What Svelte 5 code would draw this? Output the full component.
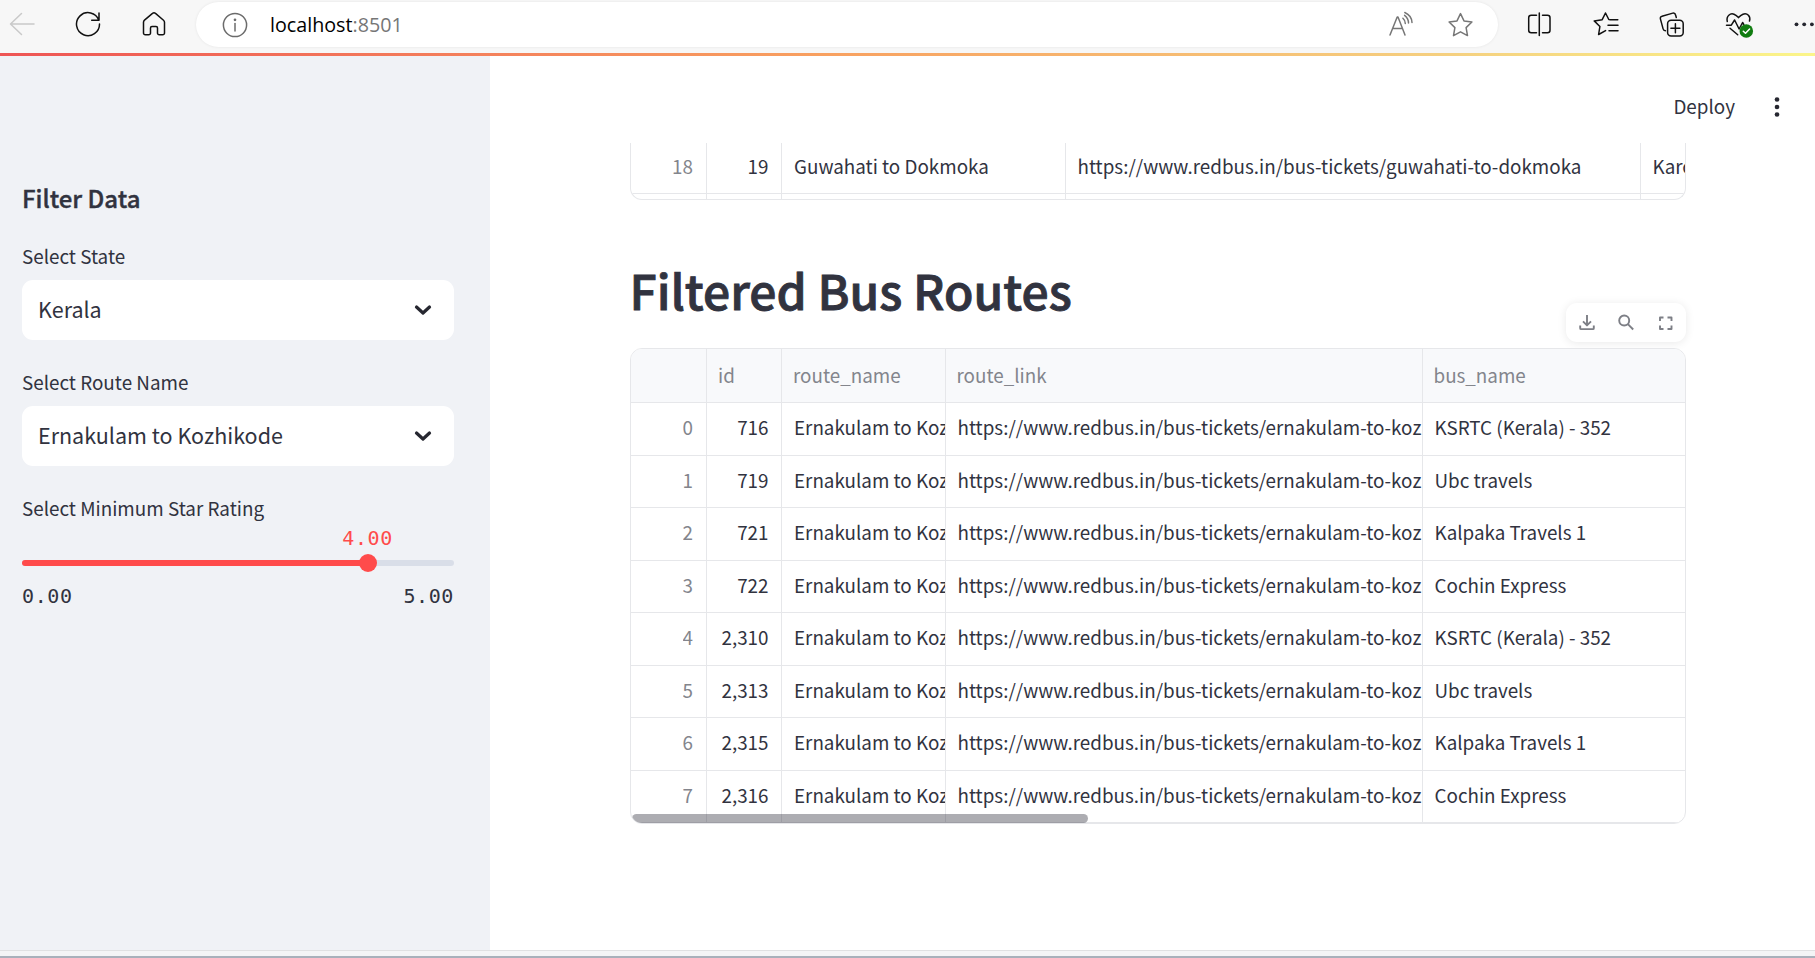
<script>
  const link = 'https://www.redbus.in/bus-tickets/ernakulam-to-kozhikode';
  const route = 'Ernakulam to Kozhikode';
  const rows = [
    ['716', 'KSRTC (Kerala) - 352'],
    ['719', 'Ubc travels'],
    ['721', 'Kalpaka Travels 1'],
    ['722', 'Cochin Express'],
    ['2,310', 'KSRTC (Kerala) - 352'],
    ['2,313', 'Ubc travels'],
    ['2,315', 'Kalpaka Travels 1'],
    ['2,316', 'Cochin Express']
  ];
  const selects = [
    { label: 'Select State', value: 'Kerala' },
    { label: 'Select Route Name', value: 'Ernakulam to Kozhikode' }
  ];
  const rating = 4;
  const maxRating = 5;
</script>

<div class="window">
  <header class="browser">
    <div class="nav">
      <svg width="28" height="28" viewBox="0 0 28 28" stroke="#c9c9c9"><path d="M26 14H2.5M13.5 3.5 2.5 14l11 10.5" /></svg>
      <svg width="28" height="28" viewBox="0 0 28 28" stroke="#111"><path d="M24.8 10.2A11.5 11.5 0 1 0 25.5 14M25 3v7.3h-7.3" /></svg>
      <svg width="28" height="28" viewBox="0 0 28 28" stroke="#111"><path d="M3.5 12.3c0-.9.4-1.6 1-2.1l8-6.8c.9-.8 2.100-.8 3 0l8 6.800c.6.5 1 1.200 1 2.100V23a1.800 1.800 0 0 1-1.800 1.800h-3.400A1.800 1.800 0 0 1 17.500 23v-5a1.500 1.500 0 0 0-1.500-1.500h-4a1.500 1.500 0 0 0-1.500 1.500v5a1.800 1.800 0 0 1-1.800 1.800H5.300A1.800 1.800 0 0 1 3.500 23z" /></svg>
    </div>
    <div class="address">
      <svg width="26" height="26" viewBox="0 0 26 26" stroke="#6b6b6b"><circle cx="13" cy="13" r="11.6" /><path d="M13 11.500v7.500" /><circle cx="13" cy="7.800" r=".6" fill="#6b6b6b" /></svg>
      <span class="url">localhost<span>:8501</span></span>
      <svg class="aloud" width="28" height="28" viewBox="0 0 28 28" stroke="#767676"><path d="M3 24 10.200 6h.8L18 24M5.800 17.500h9.700M15.900 7.200c1.700 1.500 2.500 3.300 2.400 5.300M17.600 4.300c2.600 2 3.900 4.600 3.900 7.700M17.800 1.500c4.500 2 7 5.600 7.200 10" /></svg>
      <svg width="28" height="28" viewBox="0 0 28 28" stroke="#767676"><path d="m13.500 2.600 3.500 7.300 7.900 1.100-5.800 5.600 1.400 8-7-3.800-7 3.800 1.400-8L2.100 11l7.900-1.100z" /></svg>
    </div>
    <div class="tools">
      <svg width="28" height="28" viewBox="0 0 28 28" stroke="#111"><path d="M14.300 3v22.500M11.500 5.200H6.200a2.500 2.500 0 0 0-2.500 2.500v12.600a2.500 2.500 0 0 0 2.500 2.500h5.300M17.500 5.200h5A2.500 2.500 0 0 1 25 7.700v12.600a2.500 2.500 0 0 1-2.500 2.500h-5" /></svg>
      <svg width="28" height="28" viewBox="0 0 28 28" stroke="#111"><path d="M16.800 9.500 13.500 3l-3.300 6.700-8 1.200 5.700 5.600-1.300 8 7-3.900M17.800 9.700h8M16 15.200h10M17 20.700h9" /></svg>
      <svg width="28" height="28" viewBox="0 0 28 28" stroke="#111"><path d="M18.300 7.500 17.500 4.700a2.200 2.200 0 0 0-2.700-1.600L4 6.200a2.200 2.200 0 0 0-1.600 2.700l2.700 10a2.600 2.600 0 0 0 2.300 1.900" /><rect x="9.600" y="10.300" width="15.600" height="15.600" rx="3.500" /><path d="M17.400 13.800v9M12.900 18.300h9" /></svg>
      <svg width="30" height="28" viewBox="0 0 30 28" stroke="#111"><path d="M2.300 11.500C.9 5.800 5.500 2.800 9 4.200c2 .8 3.300 2 4.500 3.400 1.200-1.400 2.500-2.600 4.500-3.400 4.200-1.500 8 2 6.500 6.900M1.500 15.200h4.800l3.300-5.200 4.500 9 3.500-6.500 1.200 2M5 18.300l7.700 6.500" /><circle cx="21.300" cy="21" r="6.800" fill="#107c10" stroke="none" /><path d="m18.300 21.200 2.200 2.100 4.100-4.300" stroke="#fff" /></svg>
      <svg width="22" height="28" viewBox="0 0 22 28" fill="#111"><circle cx="3.500" cy="14.300" r="1.900" /><circle cx="11.200" cy="14.300" r="1.900" /><circle cx="18.900" cy="14.300" r="1.900" /></svg>
    </div>
  </header>
  <div class="rainbow"></div>

  <div class="page">
    <aside>
      <h2>Filter Data</h2>
      {#each selects as s}
        <div class="field">
          <div class="caption">{s.label}</div>
          <div class="select">
            <span>{s.value}</span>
            <svg width="18" height="12" viewBox="0 0 18 12" stroke="#262730"><path d="m2.500 3 6.500 6 6.500-6" /></svg>
          </div>
        </div>
      {/each}
      <div class="rating">
        <div class="caption">Select Minimum Star Rating</div>
        <div class="slider">
          <div class="done" style:width="{(rating / maxRating) * 100}%"><i></i><b>{rating.toFixed(2)}</b></div>
        </div>
        <div class="range"><span>0.00</span><span>{maxRating.toFixed(2)}</span></div>
      </div>
    </aside>

    <main>
      <div class="deploy">
        <span>Deploy</span>
        <svg width="6" height="22" viewBox="0 0 6 22" fill="#262730"><circle cx="3" cy="3.500" r="2.300" /><circle cx="3" cy="11" r="2.300" /><circle cx="3" cy="18.500" r="2.300" /></svg>
      </div>

      <section class="content">
        <div class="grid upper">
          <div class="row">
            <div class="num index"><span>18</span></div>
            <div class="num"><span>19</span></div>
            <div><span>Guwahati to Dokmoka</span></div>
            <div><span>https://www.redbus.in/bus-tickets/guwahati-to-dokmoka</span></div>
            <div><span>Karo</span></div>
          </div>
          <div class="row stub"><div></div><div></div><div></div><div></div><div></div></div>
        </div>

        <div class="title">
          <h1>Filtered Bus Routes</h1>
          <div class="actions">
            <svg width="20" height="20" viewBox="0 0 20 20"><path d="M10 2v10M6 8.400l4 4 4-4M3.200 12.500v2.700c0 .5.400.9.900.9h11.800c.5 0 .9-.4.900-.9v-2.700" /></svg>
            <svg width="20" height="20" viewBox="0 0 20 20"><circle cx="7.200" cy="7.500" r="5" /><path d="m10.900 11.200 5.300 5.300" /></svg>
            <svg width="20" height="20" viewBox="0 0 20 20"><path d="M4 8V4.500h3.500M11.500 4.500h4V8M15.500 12.500V16h-4M7.500 16H4v-3.500" /></svg>
          </div>
        </div>

        <div class="grid lower">
          <div class="row head">
            <div></div>
            <div><span>id</span></div>
            <div><span>route_name</span></div>
            <div><span>route_link</span></div>
            <div><span>bus_name</span></div>
          </div>
          {#each rows as [id, bus], i}
            <div class="row">
              <div class="num index"><span>{i}</span></div>
              <div class="num"><span>{id}</span></div>
              <div><span>{route}</span></div>
              <div><span>{link}</span></div>
              <div><span>{bus}</span></div>
            </div>
          {/each}
          <div class="thumb"></div>
        </div>
      </section>
    </main>
  </div>
  <footer></footer>
</div>

<style>
  :global(body) { margin: 0; overflow: hidden; }
  * { box-sizing: border-box; }
  .window {
    width: 1815px; height: 958px; overflow: hidden;
    display: flex; flex-direction: column;
    background: #fff; color: #31333f;
    font-family: "Noto Sans CJK SC", "Noto Sans", sans-serif;
  }
  svg { display: block; flex: none; fill: none; stroke-width: 1.5; stroke-linecap: round; stroke-linejoin: round; }
  svg[fill] { fill: #262730; }

  .browser { height: 53px; flex: none; display: flex; align-items: flex-start; background: #f7f7f7; }
  .nav { display: flex; gap: 38px; padding: 10px 0 0 8px; width: 196px; }
  .address {
    width: 1302px; height: 45px; margin-top: 2px; padding: 0 23px 0 26px;
    display: flex; align-items: center; background: #fff; border-radius: 23px;
    box-shadow: 0 0 3px rgba(0, 0, 0, .08);
  }
  .url { margin-left: 22px; font: 19.700px/28px "Open Sans", sans-serif; color: #000; }
  .url span { color: #767676; }
  .aloud { margin-left: auto; margin-right: 32px; }
  .tools { display: flex; gap: 38.500px; padding: 10px 0 0 27px; }
  .rainbow { height: 3px; flex: none; background: linear-gradient(90deg, #ee5555, #f8a060 45%, #f5d080 80%, #fbf58a); }

  .page { height: 894px; flex: none; display: flex; }
  aside { width: 490px; flex: none; padding: 121px 36px 0 22px; background: #f0f2f6; }
  h2 { margin: 0; height: 42px; line-height: 42px; font-size: 24px; font-weight: 500; -webkit-text-stroke: .4px #31333f; }
  .field { height: 126px; padding-top: 20px; }
  .caption { height: 34px; line-height: 34px; font-size: 18.850px; }
  .select {
    margin-top: 7px; height: 60px; padding: 0 22px 0 16px;
    display: flex; align-items: center; justify-content: space-between;
    border-radius: 11px; background: #fff; font-size: 21.500px;
  }
  .select span { margin-top: -4px; }
  .select svg { stroke-width: 3.200; }
  .rating { padding-top: 20px; }
  .slider { height: 6px; margin-top: 35px; border-radius: 3px; background: #d9dee8; }
  .done { position: relative; height: 6px; border-radius: 3px; background: #ff4b4b; }
  .done i { position: absolute; right: -9px; top: -6px; width: 18px; height: 18px; border-radius: 50%; background: #ff4b4b; }
  .done b { position: absolute; right: -40px; width: 80px; bottom: 15px; text-align: center; font: 20px/26px "DejaVu Sans Mono", monospace; letter-spacing: .6px; color: #ff4b4b; }
  .range { margin-top: 15px; display: flex; justify-content: space-between; font: 20px/30px "DejaVu Sans Mono", monospace; letter-spacing: .6px; }

  main { flex: 1; }
  .deploy { height: 87px; padding: 13px 35px 0 0; display: flex; justify-content: flex-end; align-items: center; gap: 39px; font-size: 18.850px; }
  .deploy span { margin-top: -2px; }
  .deploy svg { margin-top: 1px; }
  .content { width: 1056px; margin-left: 140px; }
  .grid { border: 1px solid #e6e7ea; overflow: hidden; font-size: 18.820px; }
  .upper { height: 57px; border-top: 0; border-radius: 0 0 12px 12px; }
  .row { display: grid; height: 52.500px; }
  .upper .row { grid-template-columns: 76px 75px 283.500px 575px 1fr; height: 51px; }
  .upper .stub { height: 6px; }
  .lower .row { grid-template-columns: 76px 75px 163.500px 477px 1fr; }
  .row > div {
    min-width: 0; overflow: hidden; white-space: nowrap; padding: 0 0 4px 12px;
    display: flex; align-items: center;
    border-right: 1px solid #e6e7ea; border-bottom: 1px solid #e6e7ea;
  }
  .row span { min-width: 0; overflow: hidden; }
  .upper .row > div { padding-bottom: 5px; }
  .upper .stub > div { padding: 0; }
  .row > div:last-child { border-right: 0; }
  .row > .num { justify-content: flex-end; padding-right: 12.500px; }
  .row > .index { color: #83858c; padding-right: 13px; }
  .title { height: 148px; display: flex; justify-content: space-between; }
  h1 { margin: 50.500px 0 0 -.5px; font-size: 48px; line-height: 76px; font-weight: 500; -webkit-text-stroke: .9px #31333f; }
  .actions {
    width: 120px; height: 39px; margin-top: 103px; padding: 0 10px 0 11px;
    display: flex; align-items: center; justify-content: space-between;
    border-radius: 11px; box-shadow: 0 1px 10px rgba(0, 0, 0, .09);
  }
  .actions svg { stroke: #7d7f86; stroke-width: 1.900; stroke-linecap: butt; }
  .lower { position: relative; height: 476px; border-radius: 12px; }
  .row.head { height: 54px; background: #f8f9fb; color: #83858c; }
  .row.head > div { padding-left: 11px; padding-bottom: 2px; }
  .thumb { position: absolute; left: 1px; bottom: 0; width: 456px; height: 9px; border-radius: 5px; background: rgba(49, 51, 63, .4); }
  footer { flex: 1; border-top: 1px solid #e0e1e2; border-bottom: 2px solid #a9b1bb; background: #f4f5f6; }
</style>
